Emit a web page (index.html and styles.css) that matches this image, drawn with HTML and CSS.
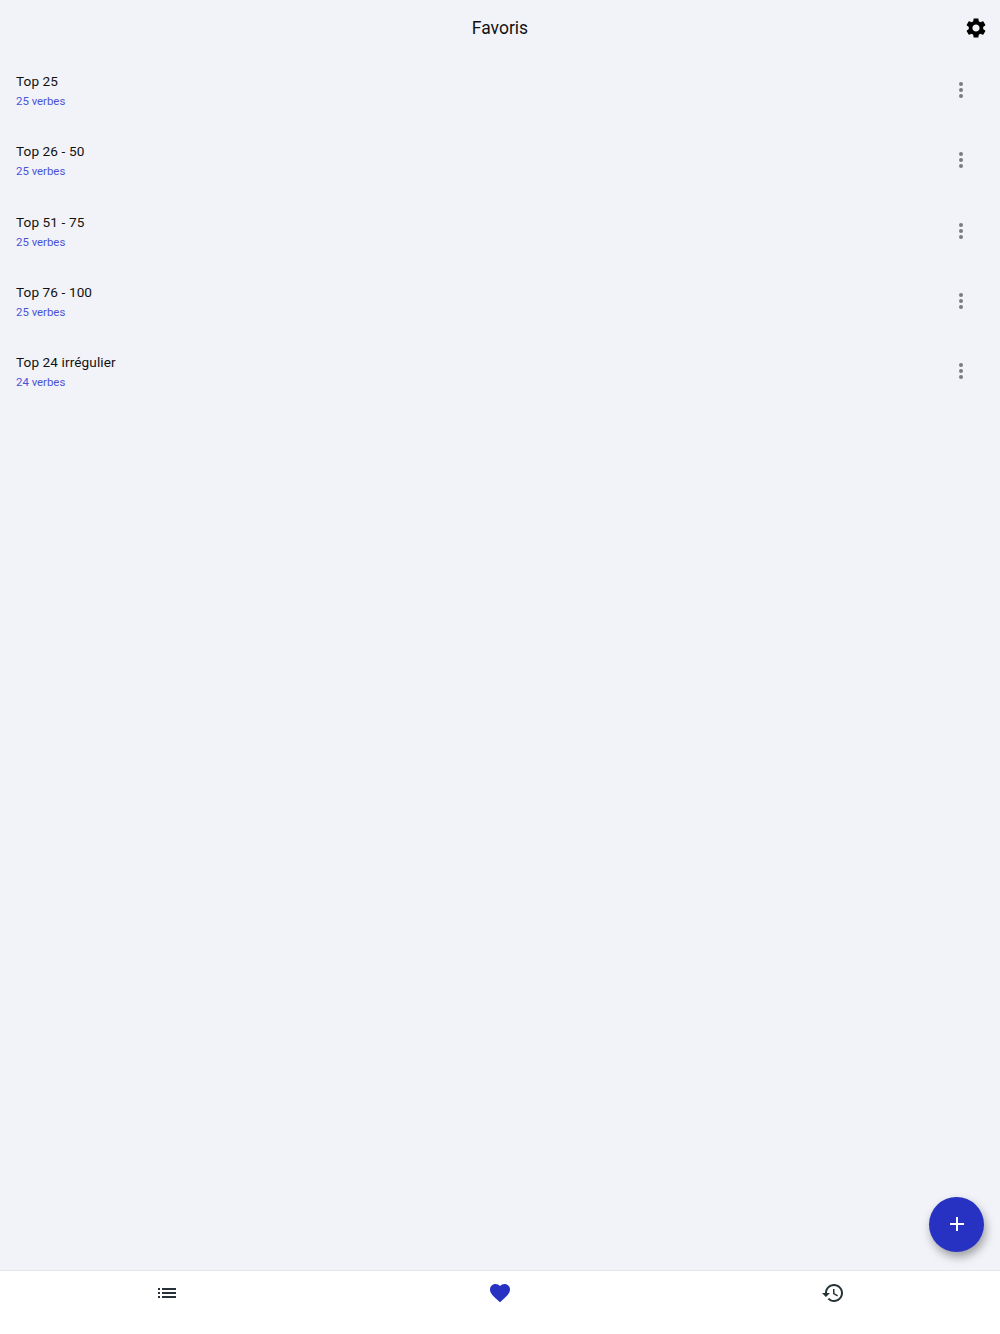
FILE: index.html
```html
<!DOCTYPE html>
<html lang="fr">
<head>
  <meta charset="UTF-8" />
  <meta name="viewport" content="width=device-width, initial-scale=1.0"/>
  <title>Favoris</title>
  <link rel="stylesheet" href="styles.css">
</head>
<body>
  <header class="top-bar">
    <span></span>
    <h1>Favoris</h1>
    <button class="icon-btn settings-btn" aria-label="Réglages">
      <svg viewBox="0 0 24 24" width="24" height="24"><path d="M19.14,12.94c0.04-0.3,0.06-0.61,0.06-0.94c0-0.32-0.02-0.64-0.07-0.94l2.03-1.58c0.18-0.14,0.23-0.41,0.12-0.61 l-1.92-3.32c-0.12-0.22-0.37-0.29-0.59-0.22l-2.39,0.96c-0.5-0.38-1.03-0.7-1.62-0.94L14.4,2.81c-0.04-0.24-0.24-0.41-0.48-0.41 h-3.84c-0.24,0-0.43,0.17-0.47,0.41L9.25,5.35C8.66,5.59,8.12,5.92,7.63,6.29L5.24,5.33c-0.22-0.08-0.47,0-0.59,0.22L2.74,8.87 C2.62,9.08,2.66,9.34,2.86,9.48l2.03,1.58C4.84,11.36,4.8,11.69,4.8,12s0.02,0.64,0.07,0.94l-2.03,1.58 c-0.18,0.14-0.23,0.41-0.12,0.61l1.92,3.32c0.12,0.22,0.37,0.29,0.59,0.22l2.39-0.96c0.5,0.38,1.03,0.7,1.62,0.94l0.36,2.54 c0.05,0.24,0.24,0.41,0.48,0.41h3.84c0.24,0,0.44-0.17,0.47-0.41l0.36-2.54c0.59-0.24,1.13-0.56,1.62-0.94l2.39,0.96 c0.22,0.08,0.47,0,0.59-0.22l1.92-3.32c0.12-0.22,0.07-0.47-0.12-0.61L19.14,12.94z M12,15.6c-1.98,0-3.6-1.62-3.6-3.6 s1.62-3.6,3.6-3.6s3.6,1.62,3.6,3.6S13.98,15.6,12,15.6z"/></svg>
    </button>
  </header>

  <main class="content">
    <ul class="fav-list">
      <li class="fav-item">
        <div class="fav-text"><span class="fav-name">Top 25</span><span class="fav-count">25 verbes</span></div>
        <button class="icon-btn more-btn" aria-label="Plus"><svg viewBox="0 0 24 24" width="24" height="24"><circle cx="12" cy="6" r="2"/><circle cx="12" cy="12" r="2"/><circle cx="12" cy="18" r="2"/></svg></button>
      </li>
      <li class="fav-item">
        <div class="fav-text"><span class="fav-name">Top 26 - 50</span><span class="fav-count">25 verbes</span></div>
        <button class="icon-btn more-btn" aria-label="Plus"><svg viewBox="0 0 24 24" width="24" height="24"><circle cx="12" cy="6" r="2"/><circle cx="12" cy="12" r="2"/><circle cx="12" cy="18" r="2"/></svg></button>
      </li>
      <li class="fav-item">
        <div class="fav-text"><span class="fav-name">Top 51 - 75</span><span class="fav-count">25 verbes</span></div>
        <button class="icon-btn more-btn" aria-label="Plus"><svg viewBox="0 0 24 24" width="24" height="24"><circle cx="12" cy="6" r="2"/><circle cx="12" cy="12" r="2"/><circle cx="12" cy="18" r="2"/></svg></button>
      </li>
      <li class="fav-item">
        <div class="fav-text"><span class="fav-name">Top 76 - 100</span><span class="fav-count">25 verbes</span></div>
        <button class="icon-btn more-btn" aria-label="Plus"><svg viewBox="0 0 24 24" width="24" height="24"><circle cx="12" cy="6" r="2"/><circle cx="12" cy="12" r="2"/><circle cx="12" cy="18" r="2"/></svg></button>
      </li>
      <li class="fav-item">
        <div class="fav-text"><span class="fav-name">Top 24 irrégulier</span><span class="fav-count">24 verbes</span></div>
        <button class="icon-btn more-btn" aria-label="Plus"><svg viewBox="0 0 24 24" width="24" height="24"><circle cx="12" cy="6" r="2"/><circle cx="12" cy="12" r="2"/><circle cx="12" cy="18" r="2"/></svg></button>
      </li>
    </ul>

    <button class="fab" aria-label="Ajouter">
      <svg viewBox="0 0 24 24" width="24" height="24"><path d="M19 13h-6v6h-2v-6H5v-2h6V5h2v6h6v2z"/></svg>
    </button>
  </main>

  <nav class="bottom-nav">
    <button class="icon-btn nav-btn" aria-label="Liste">
      <svg viewBox="0 0 24 24" width="24" height="24"><path d="M3 13h2v-2H3v2zm0 4h2v-2H3v2zm0-8h2V7H3v2zm4 4h14v-2H7v2zm0 4h14v-2H7v2zM7 7v2h14V7H7z"/></svg>
    </button>
    <button class="icon-btn nav-btn active" aria-label="Favoris">
      <svg viewBox="0 0 24 24" width="24" height="24"><path d="M12 21.35l-1.45-1.32C5.4 15.36 2 12.28 2 8.5 2 5.42 4.42 3 7.5 3c1.74 0 3.41.81 4.5 2.09C13.09 3.81 14.76 3 16.5 3 19.58 3 22 5.42 22 8.5c0 3.78-3.4 6.86-8.55 11.54L12 21.35z"/></svg>
    </button>
    <button class="icon-btn nav-btn" aria-label="Historique">
      <svg viewBox="0 0 24 24" width="24" height="24"><path d="M13 3c-4.97 0-9 4.03-9 9H1l3.89 3.89.07.14L9 12H6c0-3.87 3.13-7 7-7s7 3.13 7 7-3.13 7-7 7c-1.93 0-3.68-.79-4.94-2.06l-1.42 1.42C8.27 19.99 10.51 21 13 21c4.97 0 9-4.03 9-9s-4.03-9-9-9zm-1 5v5l4.28 2.54.72-1.21-3.5-2.08V8H12z"/></svg>
    </button>
  </nav>
</body>
</html>
```

FILE: styles.css
```css
* {
  box-sizing: border-box;
}

body {
  margin: 0;
  height: 100vh;
  display: flex;
  flex-direction: column;
  font-family: Roboto, 'Noto Sans', sans-serif;
  background-color: #f2f3f8;
  color: #111;
}

.icon-btn {
  padding: 0;
  border: none;
  background: none;
  cursor: pointer;
  display: flex;
  align-items: center;
  justify-content: center;
}

.icon-btn svg {
  display: block;
  fill: currentColor;
}

.top-bar {
  height: 55px;
  flex-shrink: 0;
  display: grid;
  grid-template-columns: 1fr auto 1fr;
  align-items: center;
}

.top-bar h1 {
  margin: 0;
  font-size: 17.5px;
  font-weight: 400;
}

.settings-btn {
  justify-self: end;
  margin-right: 12px;
  color: #000;
}

.content {
  flex: 1;
  position: relative;
}

.fav-list {
  margin: 0;
  padding: 0;
  list-style: none;
}

.fav-item {
  height: 70.25px;
  padding: 0 27px 0 16px;
  display: flex;
  align-items: center;
  justify-content: space-between;
}

.fav-text {
  display: flex;
  flex-direction: column;
  gap: 4px;
  margin-top: 2px;
}

.fav-name {
  font-size: 13.6px;
  line-height: 17px;
  letter-spacing: 0.1px;
}

.fav-count {
  font-size: 11.4px;
  line-height: 15px;
  color: #4a54d8;
}

.more-btn {
  color: #7b7b80;
}

.fab {
  position: absolute;
  right: 16px;
  bottom: 18.5px;
  width: 55px;
  height: 55px;
  padding: 0;
  border: none;
  border-radius: 50%;
  background-color: #2832c2;
  color: #fff;
  box-shadow: 2px 5px 10px rgba(0, 0, 0, 0.35);
  display: flex;
  align-items: center;
  justify-content: center;
}

.fab svg {
  fill: currentColor;
}

.bottom-nav {
  height: 64px;
  flex-shrink: 0;
  display: grid;
  grid-template-columns: repeat(3, 1fr);
  padding-bottom: 20px;
  background-color: #fff;
  border-top: 1px solid #e6e6ea;
  color: #263238;
}

.nav-btn {
  color: inherit;
}

.nav-btn.active {
  color: #2832c2;
}
```
